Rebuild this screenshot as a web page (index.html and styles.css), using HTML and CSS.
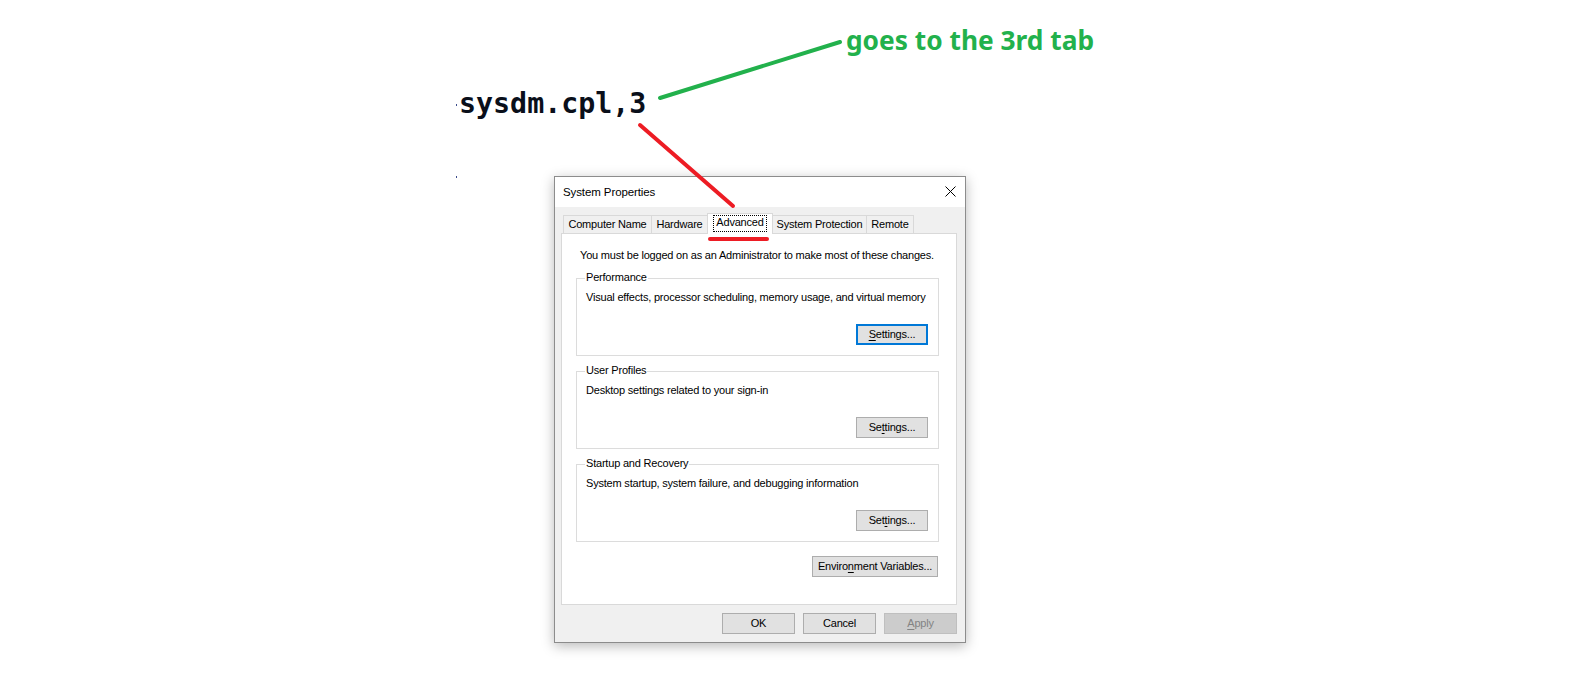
FILE: index.html
```html
<!DOCTYPE html>
<html>
<head>
<meta charset="utf-8">
<title>sysdm.cpl,3</title>
<link rel="stylesheet" href="styles.css">
</head>
<body>
<div class="stage">
  <div class="cmd">sysdm.cpl,3</div>

  <div class="dialog">
    <div class="titlebar">
      <span class="title">System Properties</span>
      <svg class="close" width="11" height="11" viewBox="0 0 11 11"><path d="M0.5 0.5 L10.5 10.5 M10.5 0.5 L0.5 10.5" stroke="#000" stroke-width="1" fill="none"/></svg>
    </div>
    <div class="body">
      <div class="tabs">
        <div class="tab t-cn">Computer Name</div>
        <div class="tab t-hw">Hardware</div>
        <div class="tab t-adv selected"><span class="focus">Advanced</span></div>
        <div class="tab t-sp">System Protection</div>
        <div class="tab t-rm">Remote</div>
      </div>
      <div class="panel">
        <div class="notice">You must be logged on as an Administrator to make most of these changes.</div>

        <div class="group">
          <div class="legend">Performance</div>
          <div class="desc">Visual effects, processor scheduling, memory usage, and virtual memory</div>
          <div class="btnrow"><button class="btn default"><u>S</u>ettings...</button></div>
        </div>

        <div class="group">
          <div class="legend">User Profiles</div>
          <div class="desc">Desktop settings related to your sign-in</div>
          <div class="btnrow"><button class="btn">Se<u>t</u>tings...</button></div>
        </div>

        <div class="group">
          <div class="legend">Startup and Recovery</div>
          <div class="desc">System startup, system failure, and debugging information</div>
          <div class="btnrow"><button class="btn">Set<u>t</u>ings...</button></div>
        </div>

        <div class="envrow"><button class="btn env">Enviro<u>n</u>ment Variables...</button></div>
      </div>
      <div class="footer">
        <button class="btn foot">OK</button>
        <button class="btn foot">Cancel</button>
        <button class="btn foot disabled"><u>A</u>pply</button>
      </div>
    </div>
  </div>

  <div class="note">goes to the 3rd tab</div>
  <span class="dot dot1"></span>
  <span class="dot dot2"></span>
  <svg class="arrows" width="1580" height="692" viewBox="0 0 1580 692">
    <line x1="660" y1="98" x2="840" y2="42" stroke="#22b14c" stroke-width="4" stroke-linecap="round"/>
    <line x1="640" y1="125" x2="733" y2="206" stroke="#ed1c24" stroke-width="4" stroke-linecap="round"/>
    <line x1="710" y1="239" x2="767" y2="239" stroke="#ed1c24" stroke-width="4" stroke-linecap="round"/>
  </svg>
</div>
</body>
</html>
```

FILE: styles.css
```css
* { box-sizing: border-box; }
html, body { margin: 0; padding: 0; background: #fff; }
.stage {
  position: relative;
  width: 1580px;
  height: 692px;
  overflow: hidden;
  padding-top: 88px;
}
.cmd {
  margin-left: 459px;
  font-family: "DejaVu Sans Mono", monospace;
  font-weight: bold;
  font-size: 28.3px;
  line-height: 32px;
  color: #0a0f1a;
}
.dialog {
  margin-top: 56px;
  margin-left: 554px;
  width: 412px;
  height: 467px;
  border: 1px solid #8c8c8c;
  background: #f0f0f0;
  box-shadow: 0 3px 12px rgba(0,0,0,0.28);
  font-family: "Liberation Sans", Arial, sans-serif;
  font-size: 11px;
  letter-spacing: -0.2px;
  line-height: 15px;
  color: #000;
}
.titlebar {
  height: 30px;
  background: #fff;
  display: flex;
  align-items: center;
  justify-content: space-between;
  padding: 0 9px 0 8px;
}
.title { font-size: 11.5px; letter-spacing: -0.1px; }
.close { display: block; margin-top: -1px; }
.body { padding: 6px 8px 0 6px; }
.tabs {
  height: 20px;
  display: flex;
  align-items: flex-end;
  padding-left: 2px;
}
.tab {
  height: 18px;
  border: 1px solid #d9d9d9;
  border-bottom: none;
  background: #f0f0f0;
  text-align: center;
  padding-top: 1px;
  white-space: nowrap;
  margin-left: -1px;
}
.t-cn { width: 89px; margin-left: 0; }
.t-hw { width: 57px; }
.t-adv { width: 66px; }
.t-sp { width: 95px; }
.t-rm { width: 48px; }
.tab.selected {
  height: 21px;
  margin-bottom: -1px;
  background: #fff;
  position: relative;
  z-index: 1;
  padding-top: 1px;
}
.focus {
  display: inline-block;
  border: 1px dotted #000;
  line-height: 13px;
  padding: 0 2px 2px;
}
.panel {
  height: 372px;
  background: #fff;
  border: 1px solid #d9d9d9;
  padding: 14px 17px 0 14px;
}
.notice { padding-left: 4px; white-space: nowrap; }
.group {
  margin-top: 15px;
  height: 78px;
  border: 1px solid #dcdcdc;
  padding: 0 10px 0 9px;
}
.group + .group { margin-top: 15px; }
.legend {
  display: table;
  margin-top: -9px;
  margin-left: -1px;
  padding: 0 1px;
  background: #fff;
}
.desc { margin-top: 5px; white-space: nowrap; }
.btnrow {
  display: flex;
  justify-content: flex-end;
  margin-top: 19px;
}
.btn {
  font-family: "Liberation Sans", Arial, sans-serif;
  font-size: 11px;
  letter-spacing: -0.2px;
  line-height: 15px;
  color: #000;
  height: 21px;
  width: 72px;
  padding: 0;
  margin: 0;
  border: 1px solid #adadad;
  background: #e1e1e1;
  text-align: center;
  white-space: nowrap;
}
.btn u { text-decoration-thickness: 1px; text-underline-offset: 2px; }
.btn.default { border: 2px solid #0078d7; }
.envrow {
  display: flex;
  justify-content: flex-end;
  margin-top: 14px;
  padding-right: 1px;
}
.btn.env { width: 126px; }
.footer {
  display: flex;
  justify-content: flex-end;
  gap: 8px;
  margin-top: 8px;
}
.btn.foot { width: 73px; }
.btn.disabled { background: #cccccc; border-color: #bfbfbf; color: #838383; }
.note {
  position: absolute;
  left: 846px;
  top: 24px;
  font-family: "Noto Sans", sans-serif;
  font-weight: bold;
  font-size: 26.3px;
  line-height: 32px;
  color: #22b14c;
  white-space: nowrap;
}
.dot {
  position: absolute;
  width: 1px;
  height: 2px;
  background: #3a4a8a;
}
.dot1 { left: 456px; top: 104px; }
.dot2 { left: 456px; top: 176px; }
.arrows { position: absolute; left: 0; top: 0; pointer-events: none; }
```
